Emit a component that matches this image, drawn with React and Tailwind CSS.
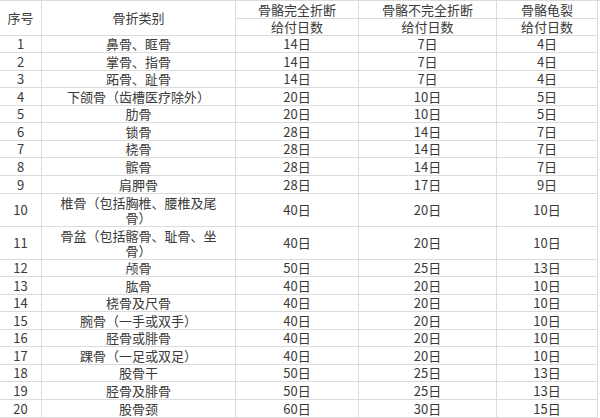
import { Fragment } from "react";

const rows = [
  ["1", "鼻骨、眶骨", "14日", "7日", "4日"],
  ["2", "掌骨、指骨", "14日", "7日", "4日"],
  ["3", "跖骨、趾骨", "14日", "7日", "4日"],
  ["4", "下颌骨（齿槽医疗除外）", "20日", "10日", "5日"],
  ["5", "肋骨", "20日", "10日", "5日"],
  ["6", "锁骨", "28日", "14日", "7日"],
  ["7", "桡骨", "28日", "14日", "7日"],
  ["8", "髌骨", "28日", "14日", "7日"],
  ["9", "肩胛骨", "28日", "17日", "9日"],
  ["10", ["椎骨（包括胸椎、腰椎及尾", "骨）"], "40日", "20日", "10日"],
  ["11", ["骨盆（包括髂骨、耻骨、坐", "骨）"], "40日", "20日", "10日"],
  ["12", "颅骨", "50日", "25日", "13日"],
  ["13", "肱骨", "40日", "20日", "10日"],
  ["14", "桡骨及尺骨", "40日", "20日", "10日"],
  ["15", "腕骨（一手或双手）", "40日", "20日", "10日"],
  ["16", "胫骨或腓骨", "40日", "20日", "10日"],
  ["17", "踝骨（一足或双足）", "40日", "20日", "10日"],
  ["18", "股骨干", "50日", "25日", "13日"],
  ["19", "胫骨及腓骨", "50日", "25日", "13日"],
  ["20", "股骨颈", "60日", "30日", "15日"],
];

const cell = "flex items-center justify-center text-center border-r border-b border-[#dcdcdc] leading-[16px]";

export default function App() {
  return (
    <div
      className="w-[600px] h-[418px] bg-white text-[#3a3a3a] text-[13px] overflow-hidden"
      style={{ fontFamily: '"Noto Sans CJK SC", "Noto Sans", sans-serif' }}
    >
      <div className="grid grid-cols-[42px_194px_123px_138px_101px] grid-rows-[18px_17px_17px_18px_17px_18px_17px_18px_17px_18px_18px_33px_33px_17px_18px_17px_18px_17px_18px_17px_18px_18px] border-t border-[#dcdcdc]">
        <div className={`${cell} row-span-2`}>序号</div>
        <div className={`${cell} row-span-2`}>骨折类别</div>
        <div className={cell}>骨骼完全折断</div>
        <div className={cell}>骨骼不完全折断</div>
        <div className={cell}>骨骼龟裂</div>
        <div className={cell}>给付日数</div>
        <div className={cell}>给付日数</div>
        <div className={cell}>给付日数</div>
        {rows.map((r) => (
          <Fragment key={r[0]}>
            <div className={cell}>{r[0]}</div>
            <div className={`${cell} flex-col`}>
              {Array.isArray(r[1])
                ? r[1].map((t) => (
                    <span key={t} className="leading-[15px]">{t}</span>
                  ))
                : r[1]}
            </div>
            <div className={cell}>{r[2]}</div>
            <div className={cell}>{r[3]}</div>
            <div className={cell}>{r[4]}</div>
          </Fragment>
        ))}
      </div>
    </div>
  );
}
